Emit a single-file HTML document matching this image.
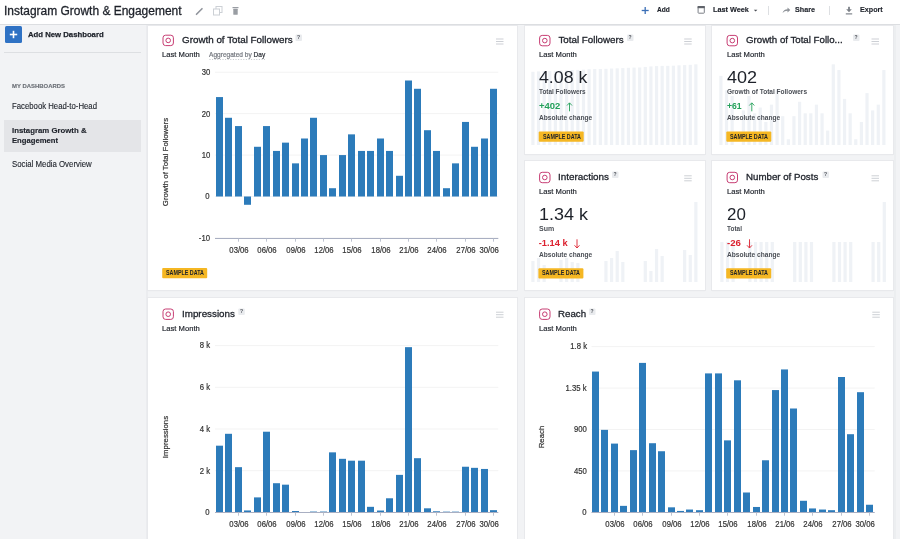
<!DOCTYPE html>
<html><head><meta charset="utf-8"><title>Instagram Growth &amp; Engagement</title>
<style>
html,body{margin:0;padding:0;width:900px;height:539px;overflow:hidden;background:#f2f3f5;font-family:"Liberation Sans", sans-serif;}
#root{position:relative;width:900px;height:539px;overflow:hidden;}
svg{position:absolute;left:0;top:0;}
</style></head><body><div id="root">
<div style="position:absolute;left:0px;top:0px;width:900px;height:24px;background:#fff"></div><div style="position:absolute;left:0px;top:24px;width:900px;height:1px;background:#dcdee1"></div><div style="position:absolute;left:768px;top:6px;width:1px;height:9px;background:#dddfe2"></div><div style="position:absolute;left:829px;top:6px;width:1px;height:9px;background:#dddfe2"></div><div style="position:absolute;left:0px;top:25px;width:148px;height:514px;background:#f2f3f5"></div><div style="position:absolute;left:146px;top:25px;width:2px;height:514px;background:#ebecef"></div><div style="position:absolute;left:5px;top:26px;width:17px;height:17px;background:#2f72c4;border-radius:1.5px"></div><div style="position:absolute;left:4px;top:52px;width:137px;height:1px;background:#dddfe2"></div><div style="position:absolute;left:4.4px;top:120px;width:136.6px;height:31.7px;background:#e4e5e8"></div><div style="position:absolute;left:148px;top:25px;width:752px;height:514px;background:#f2f3f5"></div><div style="position:absolute;left:894px;top:25px;width:2px;height:514px;background:#eceef0"></div><div style="position:absolute;left:148px;top:26px;width:369px;height:264px;background:#fff;box-shadow:0 0 0 1px #e8e9ec, 0 1px 1px rgba(0,0,0,.06)"></div><div style="position:absolute;left:525px;top:26px;width:180px;height:128px;background:#fff;box-shadow:0 0 0 1px #e8e9ec, 0 1px 1px rgba(0,0,0,.06)"></div><div style="position:absolute;left:712px;top:26px;width:181px;height:128px;background:#fff;box-shadow:0 0 0 1px #e8e9ec, 0 1px 1px rgba(0,0,0,.06)"></div><div style="position:absolute;left:525px;top:161px;width:180px;height:129px;background:#fff;box-shadow:0 0 0 1px #e8e9ec, 0 1px 1px rgba(0,0,0,.06)"></div><div style="position:absolute;left:712px;top:161px;width:181px;height:129px;background:#fff;box-shadow:0 0 0 1px #e8e9ec, 0 1px 1px rgba(0,0,0,.06)"></div><div style="position:absolute;left:148px;top:298px;width:369px;height:247px;background:#fff;box-shadow:0 0 0 1px #e8e9ec, 0 1px 1px rgba(0,0,0,.06)"></div><div style="position:absolute;left:525px;top:298px;width:368px;height:247px;background:#fff;box-shadow:0 0 0 1px #e8e9ec, 0 1px 1px rgba(0,0,0,.06)"></div>
<svg width="900" height="539" viewBox="0 0 900 539"><g stroke="#90949c" stroke-width="1.6" stroke-linecap="round"><line x1="196.5" y1="14.3" x2="202" y2="8.7"/></g><g fill="none" stroke="#ccd0d5" stroke-width="1"><rect x="216" y="6.5" width="6" height="6"/><rect x="213.5" y="9" width="6" height="6" fill="#fff"/></g><g fill="#999da3"><rect x="232.5" y="7" width="6" height="1.2"/><rect x="233.3" y="8.8" width="4.4" height="6" rx="0.5"/></g><g stroke="#3b6fb6" stroke-width="1.3"><line x1="641.7" y1="10.5" x2="648.7" y2="10.5"/><line x1="645.2" y1="7" x2="645.2" y2="14"/></g><g fill="none" stroke="#7b7f86" stroke-width="1"><rect x="698.1" y="6.6" width="6.2" height="6.6" rx="0.6"/></g><rect x="697.6" y="6" width="7.2" height="2.2" fill="#5f636a"/><path d="M753.8 9.8 L757.4 9.8 L755.6 11.6 Z" fill="#4b4f56"/><path d="M782.5 13 Q783.5 9.2 787.5 9.2 L787.5 7.5 L790.3 10 L787.5 12.5 L787.5 10.8 Q784.5 10.8 782.5 13 Z" fill="#8e9298"/><g fill="#7d8188"><rect x="848.1" y="6.8" width="1.8" height="3.2"/><path d="M846.2 9.3 L851.8 9.3 L849 12.2 Z"/><rect x="845.8" y="13.1" width="6.4" height="1.5" fill="#9a9ea4"/></g><g stroke="#fff" stroke-width="1.6"><line x1="9.8" y1="34.5" x2="17.2" y2="34.5"/><line x1="13.5" y1="30.8" x2="13.5" y2="38.2"/></g><g fill="#eff2f6"><rect x="531.30" y="71.78" width="3.2" height="73.22"/><rect x="536.92" y="71.40" width="3.2" height="73.60"/><rect x="542.54" y="71.06" width="3.2" height="73.94"/><rect x="548.16" y="71.10" width="3.2" height="73.90"/><rect x="553.78" y="70.87" width="3.2" height="74.13"/><rect x="559.40" y="70.53" width="3.2" height="74.47"/><rect x="565.02" y="70.31" width="3.2" height="74.69"/><rect x="570.64" y="70.06" width="3.2" height="74.94"/><rect x="576.26" y="69.90" width="3.2" height="75.10"/><rect x="581.88" y="69.62" width="3.2" height="75.38"/><rect x="587.50" y="69.24" width="3.2" height="75.76"/><rect x="593.12" y="69.05" width="3.2" height="75.95"/><rect x="598.74" y="69.01" width="3.2" height="75.99"/><rect x="604.36" y="68.81" width="3.2" height="76.19"/><rect x="609.98" y="68.51" width="3.2" height="76.49"/><rect x="615.60" y="68.30" width="3.2" height="76.70"/><rect x="621.22" y="68.08" width="3.2" height="76.92"/><rect x="626.84" y="67.80" width="3.2" height="77.20"/><rect x="632.46" y="67.58" width="3.2" height="77.42"/><rect x="638.08" y="67.48" width="3.2" height="77.52"/><rect x="643.70" y="66.93" width="3.2" height="78.07"/><rect x="649.32" y="66.42" width="3.2" height="78.58"/><rect x="654.94" y="66.10" width="3.2" height="78.90"/><rect x="660.56" y="65.88" width="3.2" height="79.12"/><rect x="666.18" y="65.84" width="3.2" height="79.16"/><rect x="671.80" y="65.68" width="3.2" height="79.32"/><rect x="677.42" y="65.33" width="3.2" height="79.67"/><rect x="683.04" y="65.09" width="3.2" height="79.91"/><rect x="688.66" y="64.81" width="3.2" height="80.19"/><rect x="694.28" y="64.30" width="3.2" height="80.70"/></g><g fill="#eff2f6"><rect x="719.30" y="75.83" width="3.2" height="69.17"/><rect x="724.92" y="90.24" width="3.2" height="54.76"/><rect x="730.54" y="96.00" width="3.2" height="49.00"/><rect x="741.78" y="110.41" width="3.2" height="34.59"/><rect x="747.40" y="96.00" width="3.2" height="49.00"/><rect x="753.02" y="113.30" width="3.2" height="31.70"/><rect x="758.64" y="107.53" width="3.2" height="37.47"/><rect x="764.26" y="121.94" width="3.2" height="23.06"/><rect x="769.88" y="104.65" width="3.2" height="40.35"/><rect x="775.50" y="90.24" width="3.2" height="54.76"/><rect x="781.12" y="116.18" width="3.2" height="28.82"/><rect x="786.74" y="139.24" width="3.2" height="5.76"/><rect x="792.36" y="116.18" width="3.2" height="28.82"/><rect x="797.98" y="101.77" width="3.2" height="43.23"/><rect x="803.60" y="113.30" width="3.2" height="31.70"/><rect x="809.22" y="113.30" width="3.2" height="31.70"/><rect x="814.84" y="104.65" width="3.2" height="40.35"/><rect x="820.46" y="113.30" width="3.2" height="31.70"/><rect x="826.08" y="130.59" width="3.2" height="14.41"/><rect x="831.70" y="64.30" width="3.2" height="80.70"/><rect x="837.32" y="70.06" width="3.2" height="74.94"/><rect x="842.94" y="98.89" width="3.2" height="46.11"/><rect x="848.56" y="113.30" width="3.2" height="31.70"/><rect x="854.18" y="139.24" width="3.2" height="5.76"/><rect x="859.80" y="121.94" width="3.2" height="23.06"/><rect x="865.42" y="93.12" width="3.2" height="51.88"/><rect x="871.04" y="110.41" width="3.2" height="34.59"/><rect x="876.66" y="104.65" width="3.2" height="40.35"/><rect x="882.28" y="70.06" width="3.2" height="74.94"/></g><g fill="#eff2f6"><rect x="531.30" y="261.00" width="3.2" height="21.00"/><rect x="536.92" y="258.00" width="3.2" height="24.00"/><rect x="542.54" y="265.00" width="3.2" height="17.00"/><rect x="559.40" y="260.00" width="3.2" height="22.00"/><rect x="565.02" y="258.00" width="3.2" height="24.00"/><rect x="570.64" y="262.00" width="3.2" height="20.00"/><rect x="576.26" y="263.00" width="3.2" height="19.00"/><rect x="604.36" y="261.00" width="3.2" height="21.00"/><rect x="609.98" y="258.00" width="3.2" height="24.00"/><rect x="615.60" y="251.00" width="3.2" height="31.00"/><rect x="621.22" y="262.00" width="3.2" height="20.00"/><rect x="643.70" y="261.00" width="3.2" height="21.00"/><rect x="649.32" y="271.00" width="3.2" height="11.00"/><rect x="654.94" y="249.00" width="3.2" height="33.00"/><rect x="660.56" y="256.00" width="3.2" height="26.00"/><rect x="683.04" y="250.00" width="3.2" height="32.00"/><rect x="688.66" y="255.00" width="3.2" height="27.00"/><rect x="694.28" y="202.00" width="3.2" height="80.00"/></g><g fill="#eff2f6"><rect x="720.30" y="242.00" width="3.2" height="40.00"/><rect x="725.90" y="242.00" width="3.2" height="40.00"/><rect x="731.50" y="242.00" width="3.2" height="40.00"/><rect x="748.30" y="242.00" width="3.2" height="40.00"/><rect x="753.90" y="242.00" width="3.2" height="40.00"/><rect x="759.50" y="242.00" width="3.2" height="40.00"/><rect x="765.10" y="242.00" width="3.2" height="40.00"/><rect x="770.70" y="242.00" width="3.2" height="40.00"/><rect x="793.10" y="242.00" width="3.2" height="40.00"/><rect x="798.70" y="242.00" width="3.2" height="40.00"/><rect x="804.30" y="242.00" width="3.2" height="40.00"/><rect x="809.90" y="242.00" width="3.2" height="40.00"/><rect x="832.30" y="242.00" width="3.2" height="40.00"/><rect x="837.90" y="242.00" width="3.2" height="40.00"/><rect x="843.50" y="242.00" width="3.2" height="40.00"/><rect x="849.10" y="242.00" width="3.2" height="40.00"/><rect x="871.50" y="242.00" width="3.2" height="40.00"/><rect x="877.10" y="242.00" width="3.2" height="40.00"/><rect x="882.70" y="202.00" width="3.2" height="80.00"/></g><g fill="none" stroke="#c73d73" stroke-width="1.0"><rect x="163.0" y="35.2" width="10.4" height="10.4" rx="2.6"/><circle cx="168.20000000000002" cy="40.4" r="2.3"/></g><g fill="#cdd0d5"><rect x="496" y="38.5" width="7.5" height="1"/><rect x="496" y="41.0" width="7.5" height="1"/><rect x="496" y="43.5" width="7.5" height="1"/></g><line x1="209.5" y1="59.5" x2="265" y2="59.5" stroke="#b4b7bc" stroke-width="0.8" stroke-dasharray="1 1.6"/><g fill="none" stroke="#c73d73" stroke-width="1.0"><rect x="539.6" y="35.4" width="10.4" height="10.4" rx="2.6"/><circle cx="544.8" cy="40.599999999999994" r="2.3"/></g><g fill="#cdd0d5"><rect x="684.2" y="38.5" width="7.5" height="1"/><rect x="684.2" y="41.0" width="7.5" height="1"/><rect x="684.2" y="43.5" width="7.5" height="1"/></g><g fill="none" stroke="#c73d73" stroke-width="1.0"><rect x="727.1" y="35.4" width="10.4" height="10.4" rx="2.6"/><circle cx="732.3" cy="40.599999999999994" r="2.3"/></g><g fill="#cdd0d5"><rect x="871.5" y="38.5" width="7.5" height="1"/><rect x="871.5" y="41.0" width="7.5" height="1"/><rect x="871.5" y="43.5" width="7.5" height="1"/></g><g fill="none" stroke="#c73d73" stroke-width="1.0"><rect x="539.6" y="172.29999999999998" width="10.4" height="10.4" rx="2.6"/><circle cx="544.8" cy="177.5" r="2.3"/></g><g fill="#cdd0d5"><rect x="684.2" y="175.3" width="7.5" height="1"/><rect x="684.2" y="177.8" width="7.5" height="1"/><rect x="684.2" y="180.3" width="7.5" height="1"/></g><g fill="none" stroke="#c73d73" stroke-width="1.0"><rect x="727.1" y="172.29999999999998" width="10.4" height="10.4" rx="2.6"/><circle cx="732.3" cy="177.5" r="2.3"/></g><g fill="#cdd0d5"><rect x="871.5" y="175.3" width="7.5" height="1"/><rect x="871.5" y="177.8" width="7.5" height="1"/><rect x="871.5" y="180.3" width="7.5" height="1"/></g><g stroke="#25a05a" stroke-width="0.9" fill="none"><line x1="569.5" y1="103.0" x2="569.5" y2="111.3"/><polyline points="567.0,105.5 569.5,102.8 572.0,105.5"/></g><g stroke="#25a05a" stroke-width="0.9" fill="none"><line x1="751.8" y1="103.0" x2="751.8" y2="111.3"/><polyline points="749.3,105.5 751.8,102.8 754.3,105.5"/></g><g stroke="#dc2230" stroke-width="0.9" fill="none"><line x1="577" y1="239.3" x2="577" y2="247.8"/><polyline points="574.5,245.3 577,248.0 579.5,245.3"/></g><g stroke="#dc2230" stroke-width="0.9" fill="none"><line x1="749.5" y1="239.3" x2="749.5" y2="247.8"/><polyline points="747.0,245.3 749.5,248.0 752.0,245.3"/></g><g fill="none" stroke="#c73d73" stroke-width="1.0"><rect x="163.0" y="309.0" width="10.4" height="10.4" rx="2.6"/><circle cx="168.20000000000002" cy="314.2" r="2.3"/></g><g fill="#cdd0d5"><rect x="496" y="311.7" width="7.5" height="1"/><rect x="496" y="314.2" width="7.5" height="1"/><rect x="496" y="316.7" width="7.5" height="1"/></g><g fill="none" stroke="#c73d73" stroke-width="1.0"><rect x="539.6" y="309.0" width="10.4" height="10.4" rx="2.6"/><circle cx="544.8" cy="314.2" r="2.3"/></g><g fill="#cdd0d5"><rect x="872.3" y="311.7" width="7.5" height="1"/><rect x="872.3" y="314.2" width="7.5" height="1"/><rect x="872.3" y="316.7" width="7.5" height="1"/></g><rect x="295.5" y="34.5" width="6.5" height="6.5" rx="1" fill="#e9ebee"/><rect x="162.2" y="268" width="45" height="10.2" rx="1" fill="#f5b723"/><rect x="627" y="34.5" width="6.5" height="6.5" rx="1" fill="#e9ebee"/><rect x="538.7" y="131.5" width="45" height="10.2" rx="1" fill="#f5b723"/><rect x="853" y="34.5" width="6.5" height="6.5" rx="1" fill="#e9ebee"/><rect x="726.3" y="131.5" width="45" height="10.2" rx="1" fill="#f5b723"/><rect x="612" y="171.5" width="6.5" height="6.5" rx="1" fill="#e9ebee"/><rect x="538.4" y="268.2" width="45" height="10.2" rx="1" fill="#f5b723"/><rect x="822.5" y="171.5" width="6.5" height="6.5" rx="1" fill="#e9ebee"/><rect x="726.2" y="268.2" width="45" height="10.2" rx="1" fill="#f5b723"/><rect x="238.3" y="308.5" width="6.5" height="6.5" rx="1" fill="#e9ebee"/><rect x="589" y="308.5" width="6.5" height="6.5" rx="1" fill="#e9ebee"/><line x1="215" y1="72.21" x2="498.3" y2="72.21" stroke="#f3f3f3" stroke-width="1"/><line x1="215" y1="113.64" x2="498.3" y2="113.64" stroke="#f3f3f3" stroke-width="1"/><line x1="215" y1="155.07" x2="498.3" y2="155.07" stroke="#f3f3f3" stroke-width="1"/><line x1="215" y1="196.50" x2="498.3" y2="196.50" stroke="#f3f3f3" stroke-width="1"/><line x1="215" y1="237.93" x2="498.3" y2="237.93" stroke="#f3f3f3" stroke-width="1"/><g fill="#2c7bba"><rect x="216" y="97.07" width="7" height="99.43"/><rect x="225" y="117.78" width="7" height="78.72"/><rect x="235" y="126.07" width="7" height="70.43"/><rect x="244" y="196.50" width="7" height="8.29"/><rect x="254" y="146.78" width="7" height="49.72"/><rect x="263" y="126.07" width="7" height="70.43"/><rect x="273" y="150.93" width="7" height="45.57"/><rect x="282" y="142.64" width="7" height="53.86"/><rect x="292" y="163.36" width="7" height="33.14"/><rect x="301" y="138.50" width="7" height="58.00"/><rect x="310" y="117.78" width="7" height="78.72"/><rect x="320" y="155.07" width="7" height="41.43"/><rect x="329" y="188.21" width="7" height="8.29"/><rect x="339" y="155.07" width="7" height="41.43"/><rect x="348" y="134.36" width="7" height="62.14"/><rect x="358" y="150.93" width="7" height="45.57"/><rect x="367" y="150.93" width="7" height="45.57"/><rect x="377" y="138.50" width="7" height="58.00"/><rect x="386" y="150.93" width="7" height="45.57"/><rect x="396" y="175.78" width="7" height="20.72"/><rect x="405" y="80.50" width="7" height="116.00"/><rect x="414" y="88.78" width="7" height="107.72"/><rect x="424" y="130.21" width="7" height="66.29"/><rect x="433" y="150.93" width="7" height="45.57"/><rect x="443" y="188.21" width="7" height="8.29"/><rect x="452" y="163.36" width="7" height="33.14"/><rect x="462" y="121.93" width="7" height="74.57"/><rect x="471" y="146.78" width="7" height="49.72"/><rect x="481" y="138.50" width="7" height="58.00"/><rect x="490" y="88.78" width="7" height="107.72"/></g><line x1="215" y1="238.5" x2="498.3" y2="238.5" stroke="#a9afc2" stroke-width="1"/><line x1="238.5" y1="238.5" x2="238.5" y2="241.7" stroke="#b8bdcc" stroke-width="0.9"/><line x1="266.5" y1="238.5" x2="266.5" y2="241.7" stroke="#b8bdcc" stroke-width="0.9"/><line x1="295.5" y1="238.5" x2="295.5" y2="241.7" stroke="#b8bdcc" stroke-width="0.9"/><line x1="323.5" y1="238.5" x2="323.5" y2="241.7" stroke="#b8bdcc" stroke-width="0.9"/><line x1="351.5" y1="238.5" x2="351.5" y2="241.7" stroke="#b8bdcc" stroke-width="0.9"/><line x1="380.5" y1="238.5" x2="380.5" y2="241.7" stroke="#b8bdcc" stroke-width="0.9"/><line x1="408.5" y1="238.5" x2="408.5" y2="241.7" stroke="#b8bdcc" stroke-width="0.9"/><line x1="436.5" y1="238.5" x2="436.5" y2="241.7" stroke="#b8bdcc" stroke-width="0.9"/><line x1="465.5" y1="238.5" x2="465.5" y2="241.7" stroke="#b8bdcc" stroke-width="0.9"/><line x1="493.5" y1="238.5" x2="493.5" y2="241.7" stroke="#b8bdcc" stroke-width="0.9"/><line x1="215" y1="345.60" x2="498.3" y2="345.60" stroke="#f3f3f3" stroke-width="1"/><line x1="215" y1="387.30" x2="498.3" y2="387.30" stroke="#f3f3f3" stroke-width="1"/><line x1="215" y1="429.00" x2="498.3" y2="429.00" stroke="#f3f3f3" stroke-width="1"/><line x1="215" y1="470.70" x2="498.3" y2="470.70" stroke="#f3f3f3" stroke-width="1"/><line x1="215" y1="512.40" x2="498.3" y2="512.40" stroke="#f3f3f3" stroke-width="1"/><g fill="#2c7bba"><rect x="216" y="445.68" width="7" height="66.72"/><rect x="225" y="433.80" width="7" height="78.60"/><rect x="235" y="467.16" width="7" height="45.24"/><rect x="244" y="510.46" width="7" height="1.94"/><rect x="254" y="497.39" width="7" height="15.01"/><rect x="263" y="431.71" width="7" height="80.69"/><rect x="273" y="483.21" width="7" height="29.19"/><rect x="282" y="484.67" width="7" height="27.73"/><rect x="292" y="511.00" width="7" height="1.40"/><rect x="301" y="512.13" width="7" height="0.60"/><rect x="310" y="511.57" width="7" height="0.83"/><rect x="320" y="511.57" width="7" height="0.83"/><rect x="329" y="452.35" width="7" height="60.05"/><rect x="339" y="458.82" width="7" height="53.58"/><rect x="348" y="460.69" width="7" height="51.71"/><rect x="358" y="460.69" width="7" height="51.71"/><rect x="367" y="506.83" width="7" height="5.57"/><rect x="377" y="510.54" width="7" height="1.86"/><rect x="386" y="498.28" width="7" height="14.12"/><rect x="396" y="474.87" width="7" height="37.53"/><rect x="405" y="347.16" width="7" height="165.24"/><rect x="414" y="458.19" width="7" height="54.21"/><rect x="424" y="508.31" width="7" height="4.09"/><rect x="433" y="511.29" width="7" height="1.11"/><rect x="443" y="511.65" width="7" height="0.75"/><rect x="452" y="511.65" width="7" height="0.75"/><rect x="462" y="466.74" width="7" height="45.66"/><rect x="471" y="467.84" width="7" height="44.56"/><rect x="481" y="468.95" width="7" height="43.45"/><rect x="490" y="510.17" width="7" height="2.23"/></g><line x1="215" y1="512.5" x2="498.3" y2="512.5" stroke="#a9afc2" stroke-width="1"/><line x1="238.5" y1="512.5" x2="238.5" y2="515.7" stroke="#b8bdcc" stroke-width="0.9"/><line x1="266.5" y1="512.5" x2="266.5" y2="515.7" stroke="#b8bdcc" stroke-width="0.9"/><line x1="295.5" y1="512.5" x2="295.5" y2="515.7" stroke="#b8bdcc" stroke-width="0.9"/><line x1="323.5" y1="512.5" x2="323.5" y2="515.7" stroke="#b8bdcc" stroke-width="0.9"/><line x1="351.5" y1="512.5" x2="351.5" y2="515.7" stroke="#b8bdcc" stroke-width="0.9"/><line x1="380.5" y1="512.5" x2="380.5" y2="515.7" stroke="#b8bdcc" stroke-width="0.9"/><line x1="408.5" y1="512.5" x2="408.5" y2="515.7" stroke="#b8bdcc" stroke-width="0.9"/><line x1="436.5" y1="512.5" x2="436.5" y2="515.7" stroke="#b8bdcc" stroke-width="0.9"/><line x1="465.5" y1="512.5" x2="465.5" y2="515.7" stroke="#b8bdcc" stroke-width="0.9"/><line x1="493.5" y1="512.5" x2="493.5" y2="515.7" stroke="#b8bdcc" stroke-width="0.9"/><line x1="591.5" y1="346.60" x2="874.7" y2="346.60" stroke="#f3f3f3" stroke-width="1"/><line x1="591.5" y1="388.05" x2="874.7" y2="388.05" stroke="#f3f3f3" stroke-width="1"/><line x1="591.5" y1="429.50" x2="874.7" y2="429.50" stroke="#f3f3f3" stroke-width="1"/><line x1="591.5" y1="470.95" x2="874.7" y2="470.95" stroke="#f3f3f3" stroke-width="1"/><line x1="591.5" y1="512.40" x2="874.7" y2="512.40" stroke="#f3f3f3" stroke-width="1"/><g fill="#2c7bba"><rect x="592" y="371.56" width="7" height="140.84"/><rect x="601" y="429.87" width="7" height="82.53"/><rect x="611" y="443.59" width="7" height="68.81"/><rect x="620" y="505.86" width="7" height="6.54"/><rect x="630" y="450.13" width="7" height="62.27"/><rect x="639" y="362.90" width="7" height="149.50"/><rect x="649" y="443.22" width="7" height="69.18"/><rect x="658" y="451.24" width="7" height="61.16"/><rect x="668" y="507.33" width="7" height="5.07"/><rect x="677" y="510.93" width="7" height="1.47"/><rect x="686" y="509.54" width="7" height="2.86"/><rect x="696" y="510.19" width="7" height="2.21"/><rect x="705" y="373.40" width="7" height="139.00"/><rect x="715" y="373.40" width="7" height="139.00"/><rect x="724" y="440.37" width="7" height="72.03"/><rect x="734" y="380.31" width="7" height="132.09"/><rect x="743" y="492.50" width="7" height="19.90"/><rect x="753" y="506.97" width="7" height="5.43"/><rect x="762" y="460.27" width="7" height="52.13"/><rect x="772" y="390.08" width="7" height="122.32"/><rect x="781" y="369.44" width="7" height="142.96"/><rect x="790" y="408.50" width="7" height="103.90"/><rect x="800" y="500.79" width="7" height="11.61"/><rect x="809" y="508.44" width="7" height="3.96"/><rect x="819" y="509.54" width="7" height="2.86"/><rect x="828" y="510.19" width="7" height="2.21"/><rect x="838" y="377.00" width="7" height="135.40"/><rect x="847" y="434.20" width="7" height="78.20"/><rect x="857" y="392.19" width="7" height="120.21"/><rect x="866" y="504.75" width="7" height="7.65"/></g><line x1="591.5" y1="512.5" x2="874.7" y2="512.5" stroke="#a9afc2" stroke-width="1"/><line x1="614.5" y1="512.5" x2="614.5" y2="515.7" stroke="#b8bdcc" stroke-width="0.9"/><line x1="642.5" y1="512.5" x2="642.5" y2="515.7" stroke="#b8bdcc" stroke-width="0.9"/><line x1="671.5" y1="512.5" x2="671.5" y2="515.7" stroke="#b8bdcc" stroke-width="0.9"/><line x1="699.5" y1="512.5" x2="699.5" y2="515.7" stroke="#b8bdcc" stroke-width="0.9"/><line x1="727.5" y1="512.5" x2="727.5" y2="515.7" stroke="#b8bdcc" stroke-width="0.9"/><line x1="756.5" y1="512.5" x2="756.5" y2="515.7" stroke="#b8bdcc" stroke-width="0.9"/><line x1="784.5" y1="512.5" x2="784.5" y2="515.7" stroke="#b8bdcc" stroke-width="0.9"/><line x1="812.5" y1="512.5" x2="812.5" y2="515.7" stroke="#b8bdcc" stroke-width="0.9"/><line x1="841.5" y1="512.5" x2="841.5" y2="515.7" stroke="#b8bdcc" stroke-width="0.9"/><line x1="869.5" y1="512.5" x2="869.5" y2="515.7" stroke="#b8bdcc" stroke-width="0.9"/></svg>
<div style="position:absolute;left:0;top:0;width:900px;height:539px;will-change:transform"><div id="title" style="position:absolute;white-space:nowrap;font-size:12.3px;line-height:12.3px;font-weight:400;color:#1d2129;-webkit-text-stroke:0.3px #1d2129;left:4.3px;top:5.49px;transform:scaleX(0.9727);transform-origin:0 0;">Instagram Growth &amp; Engagement</div><div id="add" style="position:absolute;white-space:nowrap;font-size:8px;line-height:8px;font-weight:700;color:#1d2129;-webkit-text-stroke:0.15px #1d2129;left:656.8px;top:6.03px;transform:scaleX(0.8250);transform-origin:0 0;">Add</div><div id="lastweek" style="position:absolute;white-space:nowrap;font-size:8px;line-height:8px;font-weight:700;color:#1d2129;-webkit-text-stroke:0.15px #1d2129;left:713px;top:6.13px;transform:scaleX(0.9103);transform-origin:0 0;">Last Week</div><div id="share" style="position:absolute;white-space:nowrap;font-size:8px;line-height:8px;font-weight:700;color:#1d2129;-webkit-text-stroke:0.15px #1d2129;left:795px;top:6.13px;transform:scaleX(0.9000);transform-origin:0 0;">Share</div><div id="export" style="position:absolute;white-space:nowrap;font-size:8px;line-height:8px;font-weight:700;color:#1d2129;-webkit-text-stroke:0.15px #1d2129;left:860.3px;top:6.13px;transform:scaleX(0.8960);transform-origin:0 0;">Export</div><div id="addnew" style="position:absolute;white-space:nowrap;font-size:8.1px;line-height:8.1px;font-weight:700;color:#1d2129;-webkit-text-stroke:0.25px #1d2129;left:28.4px;top:30.74px;transform:scaleX(0.9557);transform-origin:0 0;">Add New Dashboard</div><div id="mydash" style="position:absolute;white-space:nowrap;font-size:6px;line-height:6px;font-weight:700;color:#6b6f76;-webkit-text-stroke:0.15px #6b6f76;left:11.5px;top:82.52px;transform:scaleX(0.9889);transform-origin:0 0;">MY DASHBOARDS</div><div id="fb" style="position:absolute;white-space:nowrap;font-size:8.2px;line-height:8.2px;font-weight:400;color:#1d2129;-webkit-text-stroke:0.12px #1d2129;left:11.5px;top:103.06px;transform:scaleX(0.9478);transform-origin:0 0;">Facebook Head-to-Head</div><div id="ig1" style="position:absolute;white-space:nowrap;font-size:8.1px;line-height:8.1px;font-weight:700;color:#1d2129;-webkit-text-stroke:0.15px #1d2129;left:11.5px;top:126.84px;transform:scaleX(0.9636);transform-origin:0 0;">Instagram Growth &amp;</div><div id="ig2" style="position:absolute;white-space:nowrap;font-size:8.1px;line-height:8.1px;font-weight:700;color:#1d2129;-webkit-text-stroke:0.15px #1d2129;left:11.5px;top:137.04px;transform:scaleX(0.9469);transform-origin:0 0;">Engagement</div><div id="smo" style="position:absolute;white-space:nowrap;font-size:8.2px;line-height:8.2px;font-weight:400;color:#1d2129;-webkit-text-stroke:0.12px #1d2129;left:11.5px;top:160.96px;transform:scaleX(0.9566);transform-origin:0 0;">Social Media Overview</div><div id="c1t" style="position:absolute;white-space:nowrap;font-size:9.8px;line-height:9.8px;font-weight:400;color:#1d2129;-webkit-text-stroke:0.3px #1d2129;left:181.7px;top:35.30px;transform:scaleX(1.0027);transform-origin:0 0;">Growth of Total Followers</div><div id="q295_34" style="position:absolute;white-space:nowrap;font-size:5px;line-height:5px;font-weight:700;color:#4b4f56;left:297.1px;top:35.47px;transform:scaleX(1.0000);transform-origin:0 0;">?</div><div id="c1lm" style="position:absolute;white-space:nowrap;font-size:7.5px;line-height:7.5px;font-weight:400;color:#1d2129;-webkit-text-stroke:0.18px #1d2129;left:162.3px;top:50.85px;transform:scaleX(1.0189);transform-origin:0 0;">Last Month</div><div id="c1agg" style="position:absolute;white-space:nowrap;font-size:6.6px;line-height:6.6px;font-weight:400;color:#73777e;-webkit-text-stroke:0.2px #73777e;left:209.2px;top:51.61px;transform:scaleX(0.9964);transform-origin:0 0;">Aggregated by <span style="color:#2d3138;-webkit-text-stroke:0.2px #2d3138">Day</span></div><div id="c1b" style="position:absolute;white-space:nowrap;font-size:6.5px;line-height:6.5px;font-weight:700;color:#1d2129;left:166.2px;top:270.10px;transform:scaleX(0.8261);transform-origin:0 0;">SAMPLE DATA</div><div id="c2t" style="position:absolute;white-space:nowrap;font-size:9.8px;line-height:9.8px;font-weight:400;color:#1d2129;-webkit-text-stroke:0.3px #1d2129;left:558.4px;top:35.40px;transform:scaleX(1.0000);transform-origin:0 0;">Total Followers</div><div id="q627_34" style="position:absolute;white-space:nowrap;font-size:5px;line-height:5px;font-weight:700;color:#4b4f56;left:628.6px;top:35.47px;transform:scaleX(1.0000);transform-origin:0 0;">?</div><div id="c2lm" style="position:absolute;white-space:nowrap;font-size:7.5px;line-height:7.5px;font-weight:400;color:#1d2129;-webkit-text-stroke:0.18px #1d2129;left:539px;top:51.05px;transform:scaleX(1.0189);transform-origin:0 0;">Last Month</div><div id="c2n" style="position:absolute;white-space:nowrap;font-size:17px;line-height:17px;font-weight:400;color:#1d2129;left:539px;top:69.21px;transform:scaleX(1.0435);transform-origin:0 0;">4.08 k</div><div id="c2s" style="position:absolute;white-space:nowrap;font-size:7px;line-height:7px;font-weight:700;color:#4b4f56;left:539px;top:88.07px;transform:scaleX(0.9157);transform-origin:0 0;">Total Followers</div><div id="c2c" style="position:absolute;white-space:nowrap;font-size:9.3px;line-height:9.3px;font-weight:700;color:#23a05a;left:538.7px;top:102.33px;transform:scaleX(1.0143);transform-origin:0 0;">+402</div><div id="c2a" style="position:absolute;white-space:nowrap;font-size:7px;line-height:7px;font-weight:700;color:#4b4f56;left:538.8px;top:113.57px;transform:scaleX(0.9429);transform-origin:0 0;">Absolute change</div><div id="c2b" style="position:absolute;white-space:nowrap;font-size:6.5px;line-height:6.5px;font-weight:700;color:#1d2129;left:542.7px;top:133.60px;transform:scaleX(0.8261);transform-origin:0 0;">SAMPLE DATA</div><div id="c3t" style="position:absolute;white-space:nowrap;font-size:9.8px;line-height:9.8px;font-weight:400;color:#1d2129;-webkit-text-stroke:0.3px #1d2129;left:745.5px;top:35.40px;transform:scaleX(0.9878);transform-origin:0 0;">Growth of Total Follo...</div><div id="q853_34" style="position:absolute;white-space:nowrap;font-size:5px;line-height:5px;font-weight:700;color:#4b4f56;left:854.6px;top:35.47px;transform:scaleX(1.0000);transform-origin:0 0;">?</div><div id="c3lm" style="position:absolute;white-space:nowrap;font-size:7.5px;line-height:7.5px;font-weight:400;color:#1d2129;-webkit-text-stroke:0.18px #1d2129;left:726.8px;top:51.05px;transform:scaleX(1.0189);transform-origin:0 0;">Last Month</div><div id="c3n" style="position:absolute;white-space:nowrap;font-size:17px;line-height:17px;font-weight:400;color:#1d2129;left:726.8px;top:68.81px;transform:scaleX(1.0607);transform-origin:0 0;">402</div><div id="c3s" style="position:absolute;white-space:nowrap;font-size:7px;line-height:7px;font-weight:700;color:#4b4f56;left:726.8px;top:87.87px;transform:scaleX(0.9326);transform-origin:0 0;">Growth of Total Followers</div><div id="c3c" style="position:absolute;white-space:nowrap;font-size:9.3px;line-height:9.3px;font-weight:700;color:#23a05a;left:726.8px;top:102.33px;transform:scaleX(0.9313);transform-origin:0 0;">+61</div><div id="c3a" style="position:absolute;white-space:nowrap;font-size:7px;line-height:7px;font-weight:700;color:#4b4f56;left:726.8px;top:113.57px;transform:scaleX(0.9429);transform-origin:0 0;">Absolute change</div><div id="c3b" style="position:absolute;white-space:nowrap;font-size:6.5px;line-height:6.5px;font-weight:700;color:#1d2129;left:730.3px;top:133.60px;transform:scaleX(0.8261);transform-origin:0 0;">SAMPLE DATA</div><div id="c4t" style="position:absolute;white-space:nowrap;font-size:9.8px;line-height:9.8px;font-weight:400;color:#1d2129;-webkit-text-stroke:0.3px #1d2129;left:557.9px;top:172.20px;transform:scaleX(1.0078);transform-origin:0 0;">Interactions</div><div id="q612_171" style="position:absolute;white-space:nowrap;font-size:5px;line-height:5px;font-weight:700;color:#4b4f56;left:613.6px;top:172.47px;transform:scaleX(1.0000);transform-origin:0 0;">?</div><div id="c4lm" style="position:absolute;white-space:nowrap;font-size:7.5px;line-height:7.5px;font-weight:400;color:#1d2129;-webkit-text-stroke:0.18px #1d2129;left:539px;top:187.85px;transform:scaleX(1.0189);transform-origin:0 0;">Last Month</div><div id="c4n" style="position:absolute;white-space:nowrap;font-size:17px;line-height:17px;font-weight:400;color:#1d2129;left:539px;top:205.61px;transform:scaleX(1.0565);transform-origin:0 0;">1.34 k</div><div id="c4s" style="position:absolute;white-space:nowrap;font-size:7px;line-height:7px;font-weight:700;color:#4b4f56;left:539px;top:224.77px;transform:scaleX(1.0000);transform-origin:0 0;">Sum</div><div id="c4c" style="position:absolute;white-space:nowrap;font-size:9.3px;line-height:9.3px;font-weight:700;color:#dc2230;left:538.7px;top:238.93px;transform:scaleX(1.0000);transform-origin:0 0;">-1.14 k</div><div id="c4a" style="position:absolute;white-space:nowrap;font-size:7px;line-height:7px;font-weight:700;color:#4b4f56;left:538.8px;top:251.17px;transform:scaleX(0.9429);transform-origin:0 0;">Absolute change</div><div id="c4b" style="position:absolute;white-space:nowrap;font-size:6.5px;line-height:6.5px;font-weight:700;color:#1d2129;left:542.4px;top:270.30px;transform:scaleX(0.8261);transform-origin:0 0;">SAMPLE DATA</div><div id="c5t" style="position:absolute;white-space:nowrap;font-size:9.8px;line-height:9.8px;font-weight:400;color:#1d2129;-webkit-text-stroke:0.3px #1d2129;left:745.9px;top:172.20px;transform:scaleX(0.9904);transform-origin:0 0;">Number of Posts</div><div id="q822_171" style="position:absolute;white-space:nowrap;font-size:5px;line-height:5px;font-weight:700;color:#4b4f56;left:824.1px;top:172.47px;transform:scaleX(1.0000);transform-origin:0 0;">?</div><div id="c5lm" style="position:absolute;white-space:nowrap;font-size:7.5px;line-height:7.5px;font-weight:400;color:#1d2129;-webkit-text-stroke:0.18px #1d2129;left:726.8px;top:187.85px;transform:scaleX(1.0189);transform-origin:0 0;">Last Month</div><div id="c5n" style="position:absolute;white-space:nowrap;font-size:17px;line-height:17px;font-weight:400;color:#1d2129;left:727px;top:205.61px;transform:scaleX(0.9947);transform-origin:0 0;">20</div><div id="c5s" style="position:absolute;white-space:nowrap;font-size:7px;line-height:7px;font-weight:700;color:#4b4f56;left:726.9px;top:224.57px;transform:scaleX(0.9250);transform-origin:0 0;">Total</div><div id="c5c" style="position:absolute;white-space:nowrap;font-size:9.3px;line-height:9.3px;font-weight:700;color:#dc2230;left:726.8px;top:238.93px;transform:scaleX(1.0385);transform-origin:0 0;">-26</div><div id="c5a" style="position:absolute;white-space:nowrap;font-size:7px;line-height:7px;font-weight:700;color:#4b4f56;left:726.8px;top:251.17px;transform:scaleX(0.9429);transform-origin:0 0;">Absolute change</div><div id="c5b" style="position:absolute;white-space:nowrap;font-size:6.5px;line-height:6.5px;font-weight:700;color:#1d2129;left:730.2px;top:270.30px;transform:scaleX(0.8261);transform-origin:0 0;">SAMPLE DATA</div><div id="c6t" style="position:absolute;white-space:nowrap;font-size:9.8px;line-height:9.8px;font-weight:400;color:#1d2129;-webkit-text-stroke:0.3px #1d2129;left:181.5px;top:309.30px;transform:scaleX(1.0019);transform-origin:0 0;">Impressions</div><div id="q238_308" style="position:absolute;white-space:nowrap;font-size:5px;line-height:5px;font-weight:700;color:#4b4f56;left:239.9px;top:309.47px;transform:scaleX(1.0000);transform-origin:0 0;">?</div><div id="c6lm" style="position:absolute;white-space:nowrap;font-size:7.5px;line-height:7.5px;font-weight:400;color:#1d2129;-webkit-text-stroke:0.18px #1d2129;left:162.3px;top:325.35px;transform:scaleX(1.0189);transform-origin:0 0;">Last Month</div><div id="c7t" style="position:absolute;white-space:nowrap;font-size:9.8px;line-height:9.8px;font-weight:400;color:#1d2129;-webkit-text-stroke:0.3px #1d2129;left:557.5px;top:309.30px;transform:scaleX(0.9893);transform-origin:0 0;">Reach</div><div id="q589_308" style="position:absolute;white-space:nowrap;font-size:5px;line-height:5px;font-weight:700;color:#4b4f56;left:590.6px;top:309.47px;transform:scaleX(1.0000);transform-origin:0 0;">?</div><div id="c7lm" style="position:absolute;white-space:nowrap;font-size:7.5px;line-height:7.5px;font-weight:400;color:#1d2129;-webkit-text-stroke:0.18px #1d2129;left:539px;top:325.35px;transform:scaleX(1.0189);transform-origin:0 0;">Last Month</div><div id="c1x3" style="position:absolute;white-space:nowrap;font-size:8.3px;line-height:8.3px;font-weight:400;color:#333;-webkit-text-stroke:0.2px #333;left:238.5px;top:246.37px;transform:translateX(-50%) scaleX(0.93);">03/06</div><div id="c1x6" style="position:absolute;white-space:nowrap;font-size:8.3px;line-height:8.3px;font-weight:400;color:#333;-webkit-text-stroke:0.2px #333;left:266.5px;top:246.37px;transform:translateX(-50%) scaleX(0.93);">06/06</div><div id="c1x9" style="position:absolute;white-space:nowrap;font-size:8.3px;line-height:8.3px;font-weight:400;color:#333;-webkit-text-stroke:0.2px #333;left:295.5px;top:246.37px;transform:translateX(-50%) scaleX(0.93);">09/06</div><div id="c1x12" style="position:absolute;white-space:nowrap;font-size:8.3px;line-height:8.3px;font-weight:400;color:#333;-webkit-text-stroke:0.2px #333;left:323.5px;top:246.37px;transform:translateX(-50%) scaleX(0.93);">12/06</div><div id="c1x15" style="position:absolute;white-space:nowrap;font-size:8.3px;line-height:8.3px;font-weight:400;color:#333;-webkit-text-stroke:0.2px #333;left:351.5px;top:246.37px;transform:translateX(-50%) scaleX(0.93);">15/06</div><div id="c1x18" style="position:absolute;white-space:nowrap;font-size:8.3px;line-height:8.3px;font-weight:400;color:#333;-webkit-text-stroke:0.2px #333;left:380.5px;top:246.37px;transform:translateX(-50%) scaleX(0.93);">18/06</div><div id="c1x21" style="position:absolute;white-space:nowrap;font-size:8.3px;line-height:8.3px;font-weight:400;color:#333;-webkit-text-stroke:0.2px #333;left:408.5px;top:246.37px;transform:translateX(-50%) scaleX(0.93);">21/06</div><div id="c1x24" style="position:absolute;white-space:nowrap;font-size:8.3px;line-height:8.3px;font-weight:400;color:#333;-webkit-text-stroke:0.2px #333;left:436.5px;top:246.37px;transform:translateX(-50%) scaleX(0.93);">24/06</div><div id="c1x27" style="position:absolute;white-space:nowrap;font-size:8.3px;line-height:8.3px;font-weight:400;color:#333;-webkit-text-stroke:0.2px #333;left:465.5px;top:246.37px;transform:translateX(-50%) scaleX(0.93);">27/06</div><div id="c1x30" style="position:absolute;white-space:nowrap;font-size:8.3px;line-height:8.3px;font-weight:400;color:#333;-webkit-text-stroke:0.2px #333;right:401.7px;top:246.37px;transform:scaleX(0.93);transform-origin:100% 0;">30/06</div><div id="c1y30" style="position:absolute;white-space:nowrap;font-size:8.3px;line-height:8.3px;font-weight:400;color:#333;-webkit-text-stroke:0.2px #333;right:690px;top:68.08px;transform:scaleX(0.93);transform-origin:100% 0;">30</div><div id="c1y20" style="position:absolute;white-space:nowrap;font-size:8.3px;line-height:8.3px;font-weight:400;color:#333;-webkit-text-stroke:0.2px #333;right:690px;top:109.51px;transform:scaleX(0.93);transform-origin:100% 0;">20</div><div id="c1y10" style="position:absolute;white-space:nowrap;font-size:8.3px;line-height:8.3px;font-weight:400;color:#333;-webkit-text-stroke:0.2px #333;right:690px;top:150.94px;transform:scaleX(0.93);transform-origin:100% 0;">10</div><div id="c1y0" style="position:absolute;white-space:nowrap;font-size:8.3px;line-height:8.3px;font-weight:400;color:#333;-webkit-text-stroke:0.2px #333;right:690px;top:192.37px;transform:scaleX(0.93);transform-origin:100% 0;">0</div><div id="c1y-10" style="position:absolute;white-space:nowrap;font-size:8.3px;line-height:8.3px;font-weight:400;color:#333;-webkit-text-stroke:0.2px #333;right:690px;top:233.80px;transform:scaleX(0.93);transform-origin:100% 0;">-10</div><div id="c1title" style="position:absolute;white-space:nowrap;font-size:7.85px;line-height:7.85px;font-weight:400;color:#333;-webkit-text-stroke:0.2px #333;left:166px;top:162.2px;transform:translate(-50%,-50%) rotate(-90deg);">Growth of Total Followers</div><div id="c6x3" style="position:absolute;white-space:nowrap;font-size:8.3px;line-height:8.3px;font-weight:400;color:#333;-webkit-text-stroke:0.2px #333;left:238.5px;top:519.97px;transform:translateX(-50%) scaleX(0.93);">03/06</div><div id="c6x6" style="position:absolute;white-space:nowrap;font-size:8.3px;line-height:8.3px;font-weight:400;color:#333;-webkit-text-stroke:0.2px #333;left:266.5px;top:519.97px;transform:translateX(-50%) scaleX(0.93);">06/06</div><div id="c6x9" style="position:absolute;white-space:nowrap;font-size:8.3px;line-height:8.3px;font-weight:400;color:#333;-webkit-text-stroke:0.2px #333;left:295.5px;top:519.97px;transform:translateX(-50%) scaleX(0.93);">09/06</div><div id="c6x12" style="position:absolute;white-space:nowrap;font-size:8.3px;line-height:8.3px;font-weight:400;color:#333;-webkit-text-stroke:0.2px #333;left:323.5px;top:519.97px;transform:translateX(-50%) scaleX(0.93);">12/06</div><div id="c6x15" style="position:absolute;white-space:nowrap;font-size:8.3px;line-height:8.3px;font-weight:400;color:#333;-webkit-text-stroke:0.2px #333;left:351.5px;top:519.97px;transform:translateX(-50%) scaleX(0.93);">15/06</div><div id="c6x18" style="position:absolute;white-space:nowrap;font-size:8.3px;line-height:8.3px;font-weight:400;color:#333;-webkit-text-stroke:0.2px #333;left:380.5px;top:519.97px;transform:translateX(-50%) scaleX(0.93);">18/06</div><div id="c6x21" style="position:absolute;white-space:nowrap;font-size:8.3px;line-height:8.3px;font-weight:400;color:#333;-webkit-text-stroke:0.2px #333;left:408.5px;top:519.97px;transform:translateX(-50%) scaleX(0.93);">21/06</div><div id="c6x24" style="position:absolute;white-space:nowrap;font-size:8.3px;line-height:8.3px;font-weight:400;color:#333;-webkit-text-stroke:0.2px #333;left:436.5px;top:519.97px;transform:translateX(-50%) scaleX(0.93);">24/06</div><div id="c6x27" style="position:absolute;white-space:nowrap;font-size:8.3px;line-height:8.3px;font-weight:400;color:#333;-webkit-text-stroke:0.2px #333;left:465.5px;top:519.97px;transform:translateX(-50%) scaleX(0.93);">27/06</div><div id="c6x30" style="position:absolute;white-space:nowrap;font-size:8.3px;line-height:8.3px;font-weight:400;color:#333;-webkit-text-stroke:0.2px #333;right:401.7px;top:519.97px;transform:scaleX(0.93);transform-origin:100% 0;">30/06</div><div id="c6y8 k" style="position:absolute;white-space:nowrap;font-size:8.3px;line-height:8.3px;font-weight:400;color:#333;-webkit-text-stroke:0.2px #333;right:690px;top:341.47px;transform:scaleX(0.93);transform-origin:100% 0;">8 k</div><div id="c6y6 k" style="position:absolute;white-space:nowrap;font-size:8.3px;line-height:8.3px;font-weight:400;color:#333;-webkit-text-stroke:0.2px #333;right:690px;top:383.17px;transform:scaleX(0.93);transform-origin:100% 0;">6 k</div><div id="c6y4 k" style="position:absolute;white-space:nowrap;font-size:8.3px;line-height:8.3px;font-weight:400;color:#333;-webkit-text-stroke:0.2px #333;right:690px;top:424.87px;transform:scaleX(0.93);transform-origin:100% 0;">4 k</div><div id="c6y2 k" style="position:absolute;white-space:nowrap;font-size:8.3px;line-height:8.3px;font-weight:400;color:#333;-webkit-text-stroke:0.2px #333;right:690px;top:466.57px;transform:scaleX(0.93);transform-origin:100% 0;">2 k</div><div id="c6y0" style="position:absolute;white-space:nowrap;font-size:8.3px;line-height:8.3px;font-weight:400;color:#333;-webkit-text-stroke:0.2px #333;right:690px;top:508.27px;transform:scaleX(0.93);transform-origin:100% 0;">0</div><div id="c6title" style="position:absolute;white-space:nowrap;font-size:7.85px;line-height:7.85px;font-weight:400;color:#333;-webkit-text-stroke:0.2px #333;left:166px;top:437px;transform:translate(-50%,-50%) rotate(-90deg);">Impressions</div><div id="c7x3" style="position:absolute;white-space:nowrap;font-size:8.3px;line-height:8.3px;font-weight:400;color:#333;-webkit-text-stroke:0.2px #333;left:614.5px;top:519.97px;transform:translateX(-50%) scaleX(0.93);">03/06</div><div id="c7x6" style="position:absolute;white-space:nowrap;font-size:8.3px;line-height:8.3px;font-weight:400;color:#333;-webkit-text-stroke:0.2px #333;left:642.5px;top:519.97px;transform:translateX(-50%) scaleX(0.93);">06/06</div><div id="c7x9" style="position:absolute;white-space:nowrap;font-size:8.3px;line-height:8.3px;font-weight:400;color:#333;-webkit-text-stroke:0.2px #333;left:671.5px;top:519.97px;transform:translateX(-50%) scaleX(0.93);">09/06</div><div id="c7x12" style="position:absolute;white-space:nowrap;font-size:8.3px;line-height:8.3px;font-weight:400;color:#333;-webkit-text-stroke:0.2px #333;left:699.5px;top:519.97px;transform:translateX(-50%) scaleX(0.93);">12/06</div><div id="c7x15" style="position:absolute;white-space:nowrap;font-size:8.3px;line-height:8.3px;font-weight:400;color:#333;-webkit-text-stroke:0.2px #333;left:727.5px;top:519.97px;transform:translateX(-50%) scaleX(0.93);">15/06</div><div id="c7x18" style="position:absolute;white-space:nowrap;font-size:8.3px;line-height:8.3px;font-weight:400;color:#333;-webkit-text-stroke:0.2px #333;left:756.5px;top:519.97px;transform:translateX(-50%) scaleX(0.93);">18/06</div><div id="c7x21" style="position:absolute;white-space:nowrap;font-size:8.3px;line-height:8.3px;font-weight:400;color:#333;-webkit-text-stroke:0.2px #333;left:784.5px;top:519.97px;transform:translateX(-50%) scaleX(0.93);">21/06</div><div id="c7x24" style="position:absolute;white-space:nowrap;font-size:8.3px;line-height:8.3px;font-weight:400;color:#333;-webkit-text-stroke:0.2px #333;left:812.5px;top:519.97px;transform:translateX(-50%) scaleX(0.93);">24/06</div><div id="c7x27" style="position:absolute;white-space:nowrap;font-size:8.3px;line-height:8.3px;font-weight:400;color:#333;-webkit-text-stroke:0.2px #333;left:841.5px;top:519.97px;transform:translateX(-50%) scaleX(0.93);">27/06</div><div id="c7x30" style="position:absolute;white-space:nowrap;font-size:8.3px;line-height:8.3px;font-weight:400;color:#333;-webkit-text-stroke:0.2px #333;right:25.299999999999955px;top:519.97px;transform:scaleX(0.93);transform-origin:100% 0;">30/06</div><div id="c7y1.8 k" style="position:absolute;white-space:nowrap;font-size:8.3px;line-height:8.3px;font-weight:400;color:#333;-webkit-text-stroke:0.2px #333;right:313.5px;top:342.47px;transform:scaleX(0.93);transform-origin:100% 0;">1.8 k</div><div id="c7y1.35 k" style="position:absolute;white-space:nowrap;font-size:8.3px;line-height:8.3px;font-weight:400;color:#333;-webkit-text-stroke:0.2px #333;right:313.5px;top:383.92px;transform:scaleX(0.93);transform-origin:100% 0;">1.35 k</div><div id="c7y900" style="position:absolute;white-space:nowrap;font-size:8.3px;line-height:8.3px;font-weight:400;color:#333;-webkit-text-stroke:0.2px #333;right:313.5px;top:425.37px;transform:scaleX(0.93);transform-origin:100% 0;">900</div><div id="c7y450" style="position:absolute;white-space:nowrap;font-size:8.3px;line-height:8.3px;font-weight:400;color:#333;-webkit-text-stroke:0.2px #333;right:313.5px;top:466.82px;transform:scaleX(0.93);transform-origin:100% 0;">450</div><div id="c7y0" style="position:absolute;white-space:nowrap;font-size:8.3px;line-height:8.3px;font-weight:400;color:#333;-webkit-text-stroke:0.2px #333;right:313.5px;top:508.27px;transform:scaleX(0.93);transform-origin:100% 0;">0</div><div id="c7title" style="position:absolute;white-space:nowrap;font-size:7.85px;line-height:7.85px;font-weight:400;color:#333;-webkit-text-stroke:0.2px #333;left:542px;top:437px;transform:translate(-50%,-50%) rotate(-90deg);">Reach</div></div>
</div></body></html>
